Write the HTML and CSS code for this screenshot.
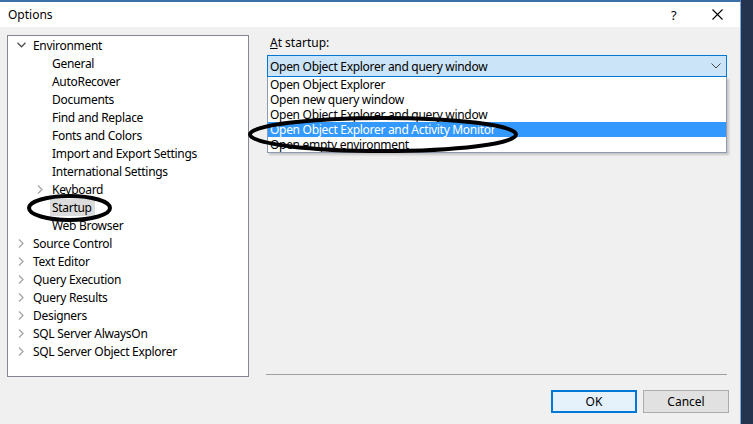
FILE: index.html
```html
<!DOCTYPE html>
<html lang="en">
  <head>
    <meta charset="UTF-8">
    <title>Options</title>
    <link rel="stylesheet" href="styles.css">
  </head>
  <body>
    <div class="screen">
      <div class="dialog">
        <div class="titlebar">
          <span class="title">Options</span>
          <span class="help">?</span>
          <svg class="close" width="11" height="11" viewBox="0 0 11 11">
            <path d="M0.5 0.5 L10.5 10.5 M10.5 0.5 L0.5 10.5" stroke="#000" stroke-width="1.1" fill="none"/>
          </svg>
        </div>

        <div class="body">
          <!-- option categories -->
          <ul class="tree">
            <li class="row"><span class="caret open"><svg width="9" height="6" viewBox="0 0 9 6"><path d="M0.5 0.8 L4.5 4.8 L8.5 0.8" stroke="#505050" stroke-width="1.3" fill="none"/></svg></span><span class="label">Environment</span></li>
            <li class="row child"><span class="caret"></span><span class="label">General</span></li>
            <li class="row child"><span class="caret"></span><span class="label">AutoRecover</span></li>
            <li class="row child"><span class="caret"></span><span class="label">Documents</span></li>
            <li class="row child"><span class="caret"></span><span class="label">Find and Replace</span></li>
            <li class="row child"><span class="caret"></span><span class="label">Fonts and Colors</span></li>
            <li class="row child"><span class="caret"></span><span class="label">Import and Export Settings</span></li>
            <li class="row child"><span class="caret"></span><span class="label">International Settings</span></li>
            <li class="row child"><span class="caret"><svg width="6" height="9" viewBox="0 0 6 9"><path d="M1 0.5 L5 4.5 L1 8.5" stroke="#a6a6a6" stroke-width="1.3" fill="none"/></svg></span><span class="label">Keyboard</span></li>
            <li class="row child"><span class="caret"></span><span class="label selected">Startup</span></li>
            <li class="row child"><span class="caret"></span><span class="label">Web Browser</span></li>
            <li class="row"><span class="caret"><svg width="6" height="9" viewBox="0 0 6 9"><path d="M1 0.5 L5 4.5 L1 8.5" stroke="#a6a6a6" stroke-width="1.3" fill="none"/></svg></span><span class="label">Source Control</span></li>
            <li class="row"><span class="caret"><svg width="6" height="9" viewBox="0 0 6 9"><path d="M1 0.5 L5 4.5 L1 8.5" stroke="#a6a6a6" stroke-width="1.3" fill="none"/></svg></span><span class="label">Text Editor</span></li>
            <li class="row"><span class="caret"><svg width="6" height="9" viewBox="0 0 6 9"><path d="M1 0.5 L5 4.5 L1 8.5" stroke="#a6a6a6" stroke-width="1.3" fill="none"/></svg></span><span class="label">Query Execution</span></li>
            <li class="row"><span class="caret"><svg width="6" height="9" viewBox="0 0 6 9"><path d="M1 0.5 L5 4.5 L1 8.5" stroke="#a6a6a6" stroke-width="1.3" fill="none"/></svg></span><span class="label">Query Results</span></li>
            <li class="row"><span class="caret"><svg width="6" height="9" viewBox="0 0 6 9"><path d="M1 0.5 L5 4.5 L1 8.5" stroke="#a6a6a6" stroke-width="1.3" fill="none"/></svg></span><span class="label">Designers</span></li>
            <li class="row"><span class="caret"><svg width="6" height="9" viewBox="0 0 6 9"><path d="M1 0.5 L5 4.5 L1 8.5" stroke="#a6a6a6" stroke-width="1.3" fill="none"/></svg></span><span class="label">SQL Server AlwaysOn</span></li>
            <li class="row"><span class="caret"><svg width="6" height="9" viewBox="0 0 6 9"><path d="M1 0.5 L5 4.5 L1 8.5" stroke="#a6a6a6" stroke-width="1.3" fill="none"/></svg></span><span class="label">SQL Server Object Explorer</span></li>
          </ul>

          <div class="pane">
            <div class="field-label"><u>A</u>t startup:</div>
            <div class="combo">
              <span>Open Object Explorer and query window</span>
              <svg width="10" height="6" viewBox="0 0 10 6"><path d="M0.5 0.5 L5 5 L9.5 0.5" stroke="#4a4a4a" stroke-width="1" fill="none"/></svg>
            </div>
            <ul class="dropdown">
              <li>Open Object Explorer</li>
              <li>Open new query window</li>
              <li>Open Object Explorer and query window</li>
              <li class="active">Open Object Explorer and Activity Monitor</li>
              <li>Open empty environment</li>
            </ul>
            <div class="sep"></div>
          </div>
        </div>

        <div class="buttons">
          <button class="btn default">OK</button>
          <button class="btn">Cancel</button>
        </div>
      </div>
      <div class="desktop"></div>

      <!-- hand-drawn marker rings -->
      <svg class="marks" width="753" height="424" viewBox="0 0 753 424">
        <ellipse cx="383" cy="134.5" rx="133" ry="16.5" fill="none" stroke="#000" stroke-width="4"/>
        <ellipse cx="69.5" cy="208" rx="40.5" ry="12" fill="none" stroke="#000" stroke-width="4"/>
      </svg>
    </div>
  </body>
</html>
```

FILE: styles.css
```css
body {
  margin: 0;
  padding: 0;
  font-family: "Noto Sans", "Open Sans", sans-serif;
  font-size: 12px;
  color: #000;
}

.screen {
  position: relative;
  display: flex;
  width: 753px;
  height: 424px;
  overflow: hidden;
}

.dialog {
  width: 740px;
  border-top: 2px solid #3d6fa8;
  border-right: 1px solid #7fa9d8;
  background-color: #f0f0f0;
}

.desktop {
  flex: 1;
  background-color: #24344f;
}

.titlebar {
  display: flex;
  align-items: center;
  height: 25px;
  background-color: #fff;
}

.title {
  padding-left: 8px;
}

.help {
  margin-left: auto;
  width: 10px;
  margin-right: 31px;
  font-size: 13px;
}

.close {
  margin-right: 17px;
}

.body {
  display: flex;
  gap: 18px;
  padding: 8px 0 0 7px;
}

/* tree */

.tree {
  list-style: none;
  margin: 0;
  padding: 0;
  width: 240px;
  height: 340px;
  border: 1px solid #828790;
  background-color: #fff;
}

.row {
  display: flex;
  align-items: center;
  height: 18px;
}

.caret {
  display: flex;
  align-items: center;
  justify-content: center;
  width: 14px;
  margin-left: 6px;
  margin-right: 5px;
}

.child .caret {
  margin-left: 25px;
}

.label {
  letter-spacing: -0.3px;
  white-space: nowrap;
}

.label.selected {
  background-color: #dcdcdc;
  padding: 0 3px 0 2px;
  margin-left: -2px;
  line-height: 17px;
}

/* right side */

.pane {
  display: flex;
  flex-direction: column;
  width: 460px;
  height: 341px;
}

.field-label {
  padding-left: 3px;
  line-height: 16px;
  margin-bottom: 4px;
}

.combo {
  display: flex;
  align-items: center;
  justify-content: space-between;
  height: 20px;
  padding: 0 5px 0 2px;
  border: 1px solid #0078d7;
  background-color: #cce4f7;
  letter-spacing: -0.3px;
}

.dropdown {
  list-style: none;
  margin: 0;
  padding: 0;
  border: 1px solid #8c9bb0;
  border-top: none;
  background-color: #fff;
  box-shadow: 2px 2px 2px rgba(0, 0, 0, 0.18);
  letter-spacing: -0.3px;
}

.dropdown li {
  box-sizing: border-box;
  height: 15px;
  line-height: 14px;
  padding: 1px 0 0 2px;
  white-space: nowrap;
}

.dropdown li.active {
  background-color: #3399ff;
  color: #fff;
}

.sep {
  margin-top: auto;
  margin-bottom: 1px;
  margin-left: -1px;
  height: 1px;
  background-color: #a0a0a0;
}

/* footer buttons */

.buttons {
  display: flex;
  justify-content: flex-end;
  gap: 6px;
  padding: 13px 11px 0 0;
}

.btn {
  width: 86px;
  height: 23px;
  font-family: inherit;
  font-size: 12px;
  border: 1px solid #adadad;
  background-color: #e1e1e1;
  padding: 0;
}

.btn.default {
  border: 2px solid #0078d7;
  background-color: #e5f1fb;
}

.marks {
  position: absolute;
  left: 0;
  top: 0;
  pointer-events: none;
}
```
